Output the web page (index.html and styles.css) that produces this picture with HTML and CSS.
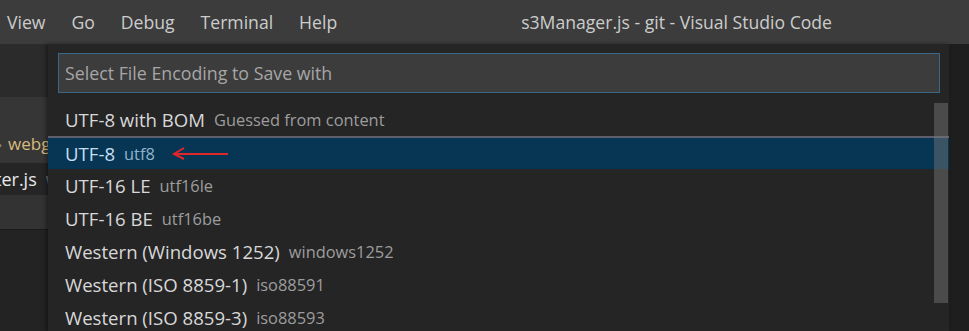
FILE: index.html
```html
<!DOCTYPE html>
<html lang="en">
<head>
  <meta charset="UTF-8">
  <title>s3Manager.js - git - Visual Studio Code</title>
  <link rel="stylesheet" href="styles.css">
</head>
<body>
  <div class="titlebar">
    <nav class="menu">
      <span class="menu-item first">View</span>
      <span class="menu-item">Go</span>
      <span class="menu-item">Debug</span>
      <span class="menu-item">Terminal</span>
      <span class="menu-item">Help</span>
    </nav>
    <div class="window-title">s3Manager.js - git - Visual Studio Code</div>
  </div>
  <div class="workspace">
    <div class="editor-left">
      <div class="tabs-strip"></div>
      <div class="breadcrumb"><span class="chev">›</span><span class="crumb">webgl</span></div>
      <div class="file-row"><span class="fname">ter.js</span><span class="fdesc">w</span></div>
      <div class="tab-grey"></div>
      <div class="editor-body"></div>
    </div>
    <div class="picker">
      <div class="picker-input">Select File Encoding to Save with</div>
      <div class="picker-list">
        <div class="row"><span class="label">UTF-8 with BOM</span><span class="desc">Guessed from content</span></div>
        <div class="row selected">
          <span class="label">UTF-8</span><span class="desc">utf8</span>
          <svg class="arrow" width="60" height="16" viewBox="0 0 60 16">
            <path d="M58 8 H6" stroke="#e0262b" stroke-width="2" fill="none"/>
            <path d="M14 2 L4 8 L14 13" stroke="#e0262b" stroke-width="2" fill="none"/>
          </svg>
        </div>
        <div class="row"><span class="label">UTF-16 LE</span><span class="desc">utf16le</span></div>
        <div class="row"><span class="label">UTF-16 BE</span><span class="desc">utf16be</span></div>
        <div class="row"><span class="label">Western (Windows 1252)</span><span class="desc">windows1252</span></div>
        <div class="row"><span class="label">Western (ISO 8859-1)</span><span class="desc">iso88591</span></div>
        <div class="row"><span class="label">Western (ISO 8859-3)</span><span class="desc">iso88593</span></div>
        <div class="scrollbar"></div>
      </div>
    </div>
    <div class="editor-right"></div>
  </div>
</body>
</html>
```

FILE: styles.css
```css
body {
  margin: 0;
  width: 969px;
  height: 331px;
  overflow: hidden;
  background: #1e1e1e;
  font-family: 'Open Sans', 'Noto Sans', sans-serif;
  color: #cccccc;
}
.titlebar {
  height: 44px;
  background: #3c3c3c;
  display: flex;
  align-items: center;
  color: #cccccc;
  font-size: 17.6px;
}
.menu {
  display: flex;
  gap: 26px;
  padding-left: 7px;
}
.window-title {
  margin-left: 184px;
}
.workspace {
  display: flex;
  height: 287px;
}
.editor-left {
  width: 48px;
  display: flex;
  flex-direction: column;
  overflow: hidden;
  white-space: nowrap;
}
.tabs-strip {
  height: 53px;
  background: #2b2b2b;
}
.breadcrumb {
  height: 66px;
  background: #363636;
  display: flex;
  align-items: flex-end;
  padding-bottom: 8px;
  box-sizing: border-box;
  font-size: 17px;
}
.chev { color: #888; margin-left: -3px; margin-right: 6px; }
.crumb { color: #d7ba7d; }
.file-row {
  height: 32px;
  background: #252526;
  font-size: 18px;
  display: flex;
  align-items: center;
}
.fname { color: #e8e8e8; margin-left: -5px; }
.fdesc { color: #777; margin-left: 9px; }
.tab-grey {
  height: 34px;
  background: #333333;
  border-bottom: 1px solid #1a1a1a;
}
.editor-body {
  flex: 1;
  background: #232323;
}
.picker {
  width: 901px;
  background: #252526;
  box-shadow: -2px 0 4px rgba(0, 0, 0, 0.4);
  position: relative;
  z-index: 1;
}
.picker-input {
  margin: 9px 9px 0 10px;
  height: 40px;
  box-sizing: border-box;
  background: #3c3c3c;
  border: 1px solid #3a6787;
  padding-left: 6px;
  display: flex;
  align-items: center;
  font-size: 17.8px;
  color: #a6a6a6;
}
.picker-list {
  margin-top: 10px;
  position: relative;
}
.row {
  height: 33px;
  display: flex;
  align-items: center;
  padding-left: 17px;
  gap: 9px;
  white-space: nowrap;
}
.row .label {
  font-size: 18.6px;
  color: #d8d8d8;
}
.row .desc {
  font-size: 16.4px;
  color: #9d9d9d;
}
.row.selected {
  background: #073655;
  border-top: 2px solid #5d5d6e;
  box-sizing: border-box;
}
.row.selected .label { color: #c6dff0; }
.row.selected .desc { color: #8fb4cc; }
.arrow {
  margin-left: 6px;
}
.scrollbar {
  position: absolute;
  top: 0;
  right: 1px;
  width: 14px;
  height: 200px;
  background: rgba(121, 121, 121, 0.45);
}
.editor-right {
  flex: 1;
  background: #1e1e1e;
}
```
